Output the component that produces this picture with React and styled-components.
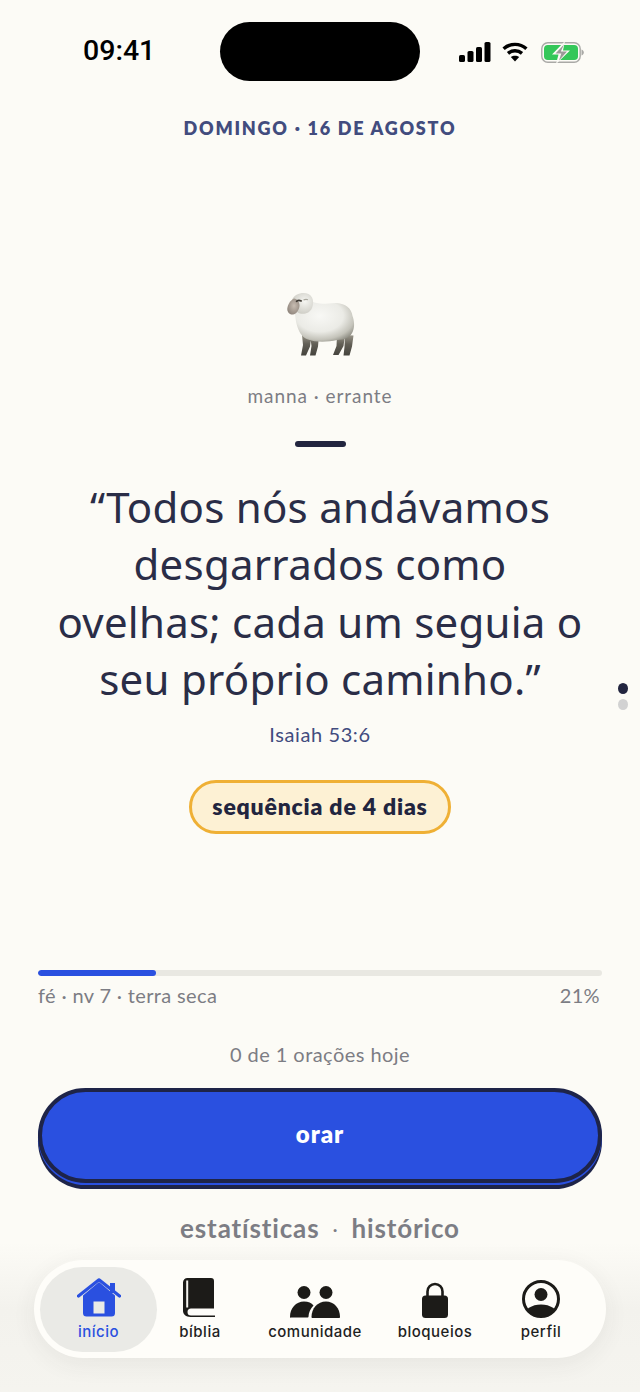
import React from "react";
import styled, { createGlobalStyle } from "styled-components";

const Global = createGlobalStyle`
  html, body { margin: 0; padding: 0; background: #fcfbf6; }
  #root { width: 640px; height: 1392px; overflow: hidden; }
`;
const Page = styled.div`
  position: relative; width: 640px; height: 1392px; background: #fcfbf6;
  display: flex; flex-direction: column; overflow: hidden;
  font-family: "Noto Sans", sans-serif; color: #22253f;
`;
const StatusBar = styled.div`
  height: 59px; margin-top: 22px; display: flex; align-items: center; padding: 0 56px 0 83px;
`;
const Time = styled.div`
  width: 137px; font: 500 28.5px/1 "Roboto", sans-serif; color: #000; letter-spacing: 0;
`;
const Island = styled.div`flex: none; width: 200px; height: 59px; border-radius: 30px; background: #000;`;
const StatusIcons = styled.div`margin-left: 39px; display: flex; align-items: center; margin-top: 1px;`;
const WifiSlot = styled.div`display: flex; margin: 0 13px 0 11px;`;
const DateLine = styled.div`
  margin-top: 36px; text-align: center; font: 800 18px/22px "Lato", sans-serif; letter-spacing: 1.75px; color: #424c7e;
`;
const Hero = styled.div`margin-top: 154px; display: flex; flex-direction: column; align-items: center;`;
const Sheep = styled.svg`display: block; margin-left: 1px;`;
const Mood = styled.div`margin-top: 27px; font: 400 19px/24px "Lato", sans-serif; letter-spacing: .95px; color: #7c7d84;`;
const Dash = styled.div`margin-top: 33px; width: 51px; height: 6px; border-radius: 3px; background: #22253f;`;
const Quote = styled.blockquote`
  margin: 31px 0 0; width: 560px; white-space: nowrap; text-align: center;
  font: 400 42px/57.4px "Noto Sans", sans-serif; color: #2a2d47; letter-spacing: .25px;
`;
const Ref = styled.div`margin-top: 13px; font: 400 20px/26px "Lato", sans-serif; letter-spacing: .6px; color: #424c7e;`;
const Streak = styled.div`
  margin-top: 33px; height: 54px; box-sizing: border-box; width: 262px; border: 3px solid #efb035; border-radius: 27px;
  background: #fdf1d4; display: flex; align-items: center; justify-content: center;
  font: 800 23px/1 "Lato", sans-serif; letter-spacing: .8px; color: #22253f;
`;
const Progress = styled.div`margin: 136px 38px 0; display: flex; flex-direction: column;`;
const Track = styled.div`height: 6px; border-radius: 3px; background: #e9e8e2; overflow: hidden;`;
const Fill = styled.div`height: 100%; border-radius: 3px; background: #2a50e0;`;
const Meta = styled.div`
  margin-top: 6px; display: flex; justify-content: space-between; padding-right: 2px;
  font: 400 20px/26px "Lato", sans-serif; letter-spacing: .35px; color: #7c7d84;
`;
const Count = styled.div`margin-top: 33px; text-align: center; font: 400 20px/26px "Lato", sans-serif; letter-spacing: .45px; color: #7c7d84;`;
const PrayButton = styled.button`
  margin: 21px 38px 0; height: 95px; box-sizing: border-box; border: 4px solid #1e2448; border-radius: 48px;
  background: #2a50e0; color: #fff; font: 800 24px/1 "Lato", sans-serif; letter-spacing: 1px;
  box-shadow: 0 2px 0 #2a50e0, 0 6px 0 #1e2448; padding: 0 0 3px;
`;
const Links = styled.div`
  margin-top: 28px; display: flex; justify-content: center; align-items: center; gap: 13px;
  font: 700 26px/34px "Lato", sans-serif; letter-spacing: .85px; color: #7c7d84;
`;
const Sep = styled.span`font-weight: 400; font-size: 20px;`;
const NavWrap = styled.div`
  position: absolute; left: 0; right: 0; bottom: 0; height: 150px;
  background: linear-gradient(to bottom, rgba(240,239,234,0) 0%, #f3f2ed 45%, #f5f4ef 100%);
  display: flex; justify-content: center;
`;
const Nav = styled.nav`
  margin-top: 18px; width: 572px; height: 98px; box-sizing: border-box; padding: 7px 6px 6px;
  display: flex; border-radius: 49px; background: #fefdf9;
  box-shadow: 0 6px 24px rgba(60,60,50,.07);
`;
const Tab = styled.div`
  flex: 0 0 ${p => p.$w}px; display: flex; flex-direction: column; align-items: center; justify-content: flex-start;
  border-radius: 43px; background: ${p => p.$active ? "#eaeae6" : "transparent"};
  color: ${p => p.$active ? "#2a50e0" : "#1f1f1f"};
`;
const IconSlot = styled.div`height: 51px; display: flex; align-items: flex-end; justify-content: center;`;
const TabLabel = styled.div`margin-top: 4px; font: 500 15px/20px "Inter", sans-serif; letter-spacing: .5px;`;
const Dots = styled.div`position: absolute; left: 618px; top: 683px; display: flex; flex-direction: column; gap: 5px;`;
const Dot = styled.div`width: 10px; height: 11px; border-radius: 50%; background: ${p => p.$on ? "#22253f" : "#d2d2d2"};`;

const Signal = () => (
  <svg width="32" height="20" viewBox="0 0 32 20"><g fill="#000">
    <rect x="0" y="13" width="6" height="7" rx="1.6"/><rect x="8.5" y="9" width="6" height="11" rx="1.6"/>
    <rect x="17" y="5" width="6" height="15" rx="1.6"/><rect x="25.5" y="0" width="6" height="20" rx="1.6"/></g></svg>
);
const Wifi = () => (
  <svg width="26" height="20" viewBox="0 0 26 20" fill="none" stroke="#000" strokeWidth="3.4">
    <path d="M1.600 6.800C8 .9 18 .9 24.400 6.800"/><path d="M6 11.400c4-3.500 10-3.500 14 0"/>
    <path d="M13 19.500l-4.200-4.400c2.400-1.800 6-1.800 8.400 0z" fill="#000" stroke="none"/></svg>
);
const Battery = () => (
  <svg width="43" height="21" viewBox="0 0 43 21">
    <rect x=".8" y=".8" width="38.400" height="19.400" rx="6" fill="none" stroke="#a9a9a6" strokeWidth="1.400"/>
    <rect x="3" y="3" width="34" height="15" rx="3.800" fill="#34c759"/>
    <path d="M40.500 7.500v6c1.500-.5 2.300-1.700 2.300-3s-.8-2.500-2.300-3z" fill="#a9a9a6"/>
    <path d="M24 -1 11 12.500h6.500L15 22 29 8.500h-7z" fill="#fcfbf6"/>
    <path d="M23 2.500 14.500 11.500h5.800L18 18.500 26 9.500h-6.200z" fill="#9a9a98"/>
  </svg>
);
const SheepIcon = () => (
  <Sheep width="68" height="64" viewBox="0 0 68 64">
    <defs>
      <radialGradient id="wool" cx=".42" cy=".36" r=".72"><stop offset="0" stopColor="#f8f8f5"/><stop offset=".55" stopColor="#ebebe6"/><stop offset=".82" stopColor="#c4c3ba"/><stop offset="1" stopColor="#8c8b81"/></radialGradient>
      <linearGradient id="leg" x1="0" y1="0" x2="0" y2="1"><stop offset="0" stopColor="#9a968a"/><stop offset=".45" stopColor="#625f56"/><stop offset="1" stopColor="#45433d"/></linearGradient>
      <radialGradient id="face" cx=".55" cy=".45" r=".6"><stop offset="0" stopColor="#c8bdb2"/><stop offset="1" stopColor="#8f857c"/></radialGradient>
      <radialGradient id="cap" cx=".6" cy=".4" r=".7"><stop offset="0" stopColor="#f6f6f2"/><stop offset="1" stopColor="#c9c8c0"/></radialGradient>
    </defs>
    <path d="M15 42l1 10-2 10.500h5l4-9 1.500-12zM23 42l1.500 11-1.500 9.500h5.500l2.500-9 1-12z" fill="url(#leg)"/>
    <path d="M50 42l-.5 11-3.500 9h5.500l5-9 1.500-11zM58 42l-.5 12-1 8.500h6l2.500-9 1.500-11z" fill="url(#leg)"/>
    <path d="M8 16C9 8 20 7 30 10c6 2 13-.5 20 0 8 .8 14.500 5 15.500 13 1.500 4 2.500 10 .5 15-2 6-8 9-16 9-9 2-21 2.500-29-.5C11 43 8 29 8 16z" fill="url(#wool)"/>
    <path d="M5 7C7 1 16-1.500 21.500 1c5 2.500 5.500 8.500 3.500 14-2 5-7.500 6.500-12 5.500C9 19.500 6 13.500 5 7z" fill="url(#cap)"/>
    <path d="M7 5.500C3.500 7 .8 11.500.3 15.500c-.3 3.500 2.200 6.500 5.700 6 3.500-.5 6-4.500 6.500-8.500.3-3.500-2.500-7.500-5.500-7.500z" fill="url(#face)"/>
    <path d="M9.500 8.300c1.500-1.200 3-1.200 4.800-.3" stroke="#3f3b35" strokeWidth="1.600" fill="none" strokeLinecap="round"/>
    <path d="M16.500 7c1.500-.8 3-.8 4.500-.3" stroke="#a9a79e" strokeWidth="1.200" fill="none"/>
  </Sheep>
);
const HomeIcon = () => (
  <svg width="44" height="40" viewBox="0 0 44 40">
    <path d="M6 17.500 22 4l16 13.500V35a3.500 3.500 0 0 1-3.500 3.500h-25A3.500 3.500 0 0 1 6 35z" fill="#2a50e0"/>
    <rect x="16.500" y="23.500" width="11" height="12" fill="#eaeae6"/>
    <path d="M1.500 18 22 1.800 42.500 18" fill="none" stroke="#2a50e0" strokeWidth="3.200" strokeLinecap="round" strokeLinejoin="round"/>
    <rect x="33" y="5" width="5" height="10" fill="#2a50e0"/>
  </svg>
);
const BookSvg = styled.svg`margin-right: 2px;`;
const BookIcon = () => (
  <BookSvg width="32" height="40" viewBox="0 0 32 40">
    <path d="M4.500 0H28a3 3 0 0 1 3 3v27.500H8a3.500 3.500 0 0 0 0 7h24V39H7.500C3 39 0 36 0 33V4.500C0 2 2 0 4.500 0z" fill="#1c1b18"/>
    <rect x="3.200" y="2.500" width="2" height="27" fill="#f4f3ee"/>
  </BookSvg>
);
const PeopleIcon = () => (
  <svg width="50" height="32" viewBox="0 0 50 32" fill="#1c1b18">
    <circle cx="14" cy="6.500" r="6.500"/><circle cx="36" cy="6.500" r="6.500"/>
    <path d="M0 31c0-9 6-15.500 14-15.500 4.500 0 7.500 1.500 9.500 4-3 3-5 7-5 11.300 0 .4-.3.700-.8.700H1.200C.5 32 0 31.600 0 31z"/>
    <path d="M50 31c0-9-6-15.500-14-15.500-8.500 0-14.500 7-14.500 15.500 0 .6.500 1 1 1h26.300c.7 0 1.200-.4 1.200-1z"/>
  </svg>
);
const LockIcon = () => (
  <svg width="26" height="36" viewBox="0 0 26 36">
    <path d="M5.500 15V9.500a7.500 7.500 0 0 1 15 0V15" fill="none" stroke="#1c1b18" strokeWidth="2.600"/>
    <rect x="0" y="13.500" width="26" height="22.500" rx="3.500" fill="#1c1b18"/>
  </svg>
);
const ProfileIcon = () => (
  <svg width="38" height="38" viewBox="0 0 38 38">
    <defs><clipPath id="pc"><circle cx="19" cy="19" r="17"/></clipPath></defs>
    <circle cx="19" cy="19" r="17.500" fill="none" stroke="#1c1b18" strokeWidth="3"/>
    <circle cx="19" cy="14.500" r="6.500" fill="#1c1b18"/>
    <ellipse cx="19" cy="36" rx="17" ry="11.500" fill="#1c1b18" clipPath="url(#pc)"/>
  </svg>
);

const tabs = [
  { label: "início", w: 117, icon: <HomeIcon />, active: true },
  { label: "bíblia", w: 86, icon: <BookIcon /> },
  { label: "comunidade", w: 144, icon: <PeopleIcon /> },
  { label: "bloqueios", w: 96, icon: <LockIcon /> },
  { label: "perfil", w: 116, icon: <ProfileIcon /> },
];

export default function App() {
  return (
    <Page>
      <Global />
      <StatusBar>
        <Time>09:41</Time>
        <Island />
        <StatusIcons><Signal /><WifiSlot><Wifi /></WifiSlot><Battery /></StatusIcons>
      </StatusBar>
      <DateLine>DOMINGO · 16 DE AGOSTO</DateLine>
      <Hero>
        <SheepIcon />
        <Mood>manna · errante</Mood>
        <Dash />
        <Quote>“Todos nós andávamos<br />desgarrados como<br />ovelhas; cada um seguia o<br />seu próprio caminho.”</Quote>
        <Ref>Isaiah 53:6</Ref>
        <Streak>sequência de 4 dias</Streak>
      </Hero>
      <Progress>
        <Track><Fill style={{ width: "21%" }} /></Track>
        <Meta><span>fé · nv 7 · terra seca</span><span>21%</span></Meta>
      </Progress>
      <Count>0 de 1 orações hoje</Count>
      <PrayButton>orar</PrayButton>
      <Links><span>estatísticas</span><Sep>·</Sep><span>histórico</span></Links>
      <NavWrap>
        <Nav>
          {tabs.map(t => (
            <Tab key={t.label} $w={t.w} $active={t.active}>
              <IconSlot>{t.icon}</IconSlot>
              <TabLabel>{t.label}</TabLabel>
            </Tab>
          ))}
        </Nav>
      </NavWrap>
      <Dots><Dot $on /><Dot /></Dots>
    </Page>
  );
}
